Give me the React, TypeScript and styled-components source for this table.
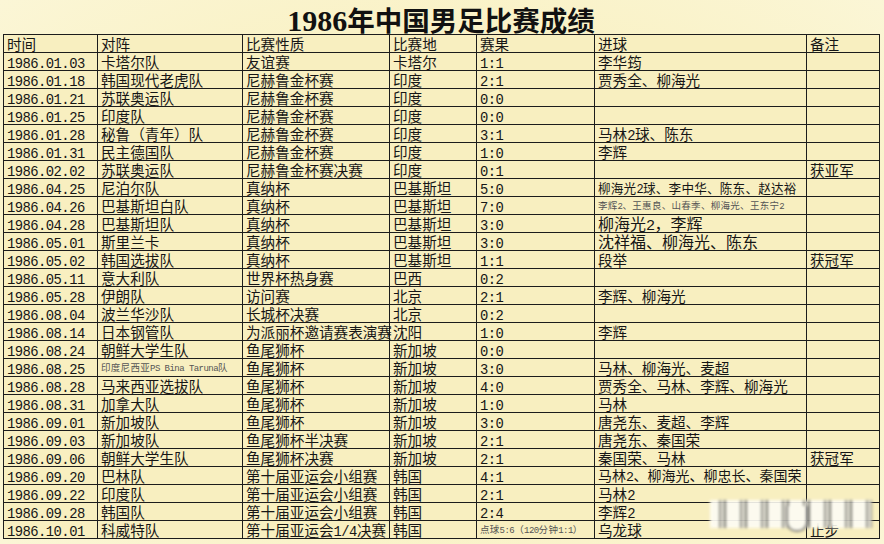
import React from 'react';
import styled, { createGlobalStyle, css } from 'styled-components';

type Size = 'lg' | 'md' | 'nm' | 'sm' | 'xs';

type Row = {
    date: string;
    team: string;
    teamSize?: Size;
    kind: string;
    place: string;
    score: string;
    scoreSize?: Size;
    goals?: string;
    goalsSize?: Size;
    note?: string;
};

const rows: Row[] = [
    { date: '1986.01.03', team: '卡塔尔队', kind: '友谊赛', place: '卡塔尔', score: '1:1', goals: '李华筠' },
    { date: '1986.01.18', team: '韩国现代老虎队', kind: '尼赫鲁金杯赛', place: '印度', score: '2:1', goals: '贾秀全、柳海光' },
    { date: '1986.01.21', team: '苏联奥运队', kind: '尼赫鲁金杯赛', place: '印度', score: '0:0' },
    { date: '1986.01.25', team: '印度队', kind: '尼赫鲁金杯赛', place: '印度', score: '0:0' },
    { date: '1986.01.28', team: '秘鲁（青年）队', kind: '尼赫鲁金杯赛', place: '印度', score: '3:1', goals: '马林2球、陈东' },
    { date: '1986.01.31', team: '民主德国队', kind: '尼赫鲁金杯赛', place: '印度', score: '1:0', goals: '李辉' },
    { date: '1986.02.02', team: '苏联奥运队', kind: '尼赫鲁金杯赛决赛', place: '印度', score: '0:1', note: '获亚军' },
    { date: '1986.04.25', team: '尼泊尔队', kind: '真纳杯', place: '巴基斯坦', score: '5:0', goals: '柳海光2球、李中华、陈东、赵达裕', goalsSize: 'sm' },
    { date: '1986.04.26', team: '巴基斯坦白队', kind: '真纳杯', place: '巴基斯坦', score: '7:0', goals: '李辉2、王惠良、山春季、柳海光、王东宁2', goalsSize: 'xs' },
    { date: '1986.04.28', team: '巴基斯坦队', kind: '真纳杯', place: '巴基斯坦', score: '3:0', goals: '柳海光2，李辉', goalsSize: 'lg' },
    { date: '1986.05.01', team: '斯里兰卡', kind: '真纳杯', place: '巴基斯坦', score: '3:0', goals: '沈祥福、柳海光、陈东', goalsSize: 'lg' },
    { date: '1986.05.02', team: '韩国选拔队', kind: '真纳杯', place: '巴基斯坦', score: '1:1', goals: '段举', note: '获冠军' },
    { date: '1986.05.11', team: '意大利队', kind: '世界杯热身赛', place: '巴西', score: '0:2' },
    { date: '1986.05.28', team: '伊朗队', kind: '访问赛', place: '北京', score: '2:1', goals: '李辉、柳海光' },
    { date: '1986.08.04', team: '波兰华沙队', kind: '长城杯决赛', place: '北京', score: '0:2' },
    { date: '1986.08.14', team: '日本钢管队', kind: '为派丽杯邀请赛表演赛', place: '沈阳', score: '1:0', goals: '李辉' },
    { date: '1986.08.24', team: '朝鲜大学生队', kind: '鱼尾狮杯', place: '新加坡', score: '0:0' },
    { date: '1986.08.25', team: '印度尼西亚PS Bina Taruna队', teamSize: 'xs', kind: '鱼尾狮杯', place: '新加坡', score: '3:0', goals: '马林、柳海光、麦超' },
    { date: '1986.08.28', team: '马来西亚选拔队', kind: '鱼尾狮杯', place: '新加坡', score: '4:0', goals: '贾秀全、马林、李辉、柳海光' },
    { date: '1986.08.31', team: '加拿大队', kind: '鱼尾狮杯', place: '新加坡', score: '1:0', goals: '马林' },
    { date: '1986.09.01', team: '新加坡队', kind: '鱼尾狮杯', place: '新加坡', score: '3:0', goals: '唐尧东、麦超、李辉' },
    { date: '1986.09.03', team: '新加坡队', kind: '鱼尾狮杯半决赛', place: '新加坡', score: '2:1', goals: '唐尧东、秦国荣' },
    { date: '1986.09.06', team: '朝鲜大学生队', kind: '鱼尾狮杯决赛', place: '新加坡', score: '2:1', goals: '秦国荣、马林', note: '获冠军' },
    { date: '1986.09.20', team: '巴林队', kind: '第十届亚运会小组赛', place: '韩国', score: '4:1', goals: '马林2、柳海光、柳忠长、秦国荣', goalsSize: 'nm' },
    { date: '1986.09.22', team: '印度队', kind: '第十届亚运会小组赛', place: '韩国', score: '2:1', goals: '马林2' },
    { date: '1986.09.28', team: '韩国队', kind: '第十届亚运会小组赛', place: '韩国', score: '2:4', goals: '李辉2' },
    { date: '1986.10.01', team: '科威特队', kind: '第十届亚运会1/4决赛', place: '韩国', score: '点球5:6（120分钟1:1）', scoreSize: 'xs', goals: '乌龙球', note: '止步' },
];

const headers = ['时间', '对阵', '比赛性质', '比赛地', '赛果', '进球', '备注'];
const widths = [94, 145, 147, 87, 118, 212, 73];

// ascii runs get the narrow mono face, like the old SimSun half-width glyphs
const mix = (text: string) =>
    text.split(/([\x20-\x7e]+)/).map((part, i) =>
        /^[\x20-\x7e]+$/.test(part) ? <Latin key={i}>{part}</Latin> : part
    );

const Cell = ({ size, children }: { size?: Size, children?: React.ReactNode }) => (
    <StyledCell>
        <CellText size={size}>{children}</CellText>
    </StyledCell>
);

const App = () => {
    return (
        <>
            <GlobalStyle />
            <StyledPage>
                <StyledTitle>
                    <TitleNum>1986</TitleNum>年中国男足比赛成绩
                </StyledTitle>
                <StyledSheet>
                    <StyledTable>
                        <colgroup>
                            {widths.map((w, i) => <col key={i} style={{ width: w }} />)}
                        </colgroup>
                        <tbody>
                            <tr>
                                {headers.map(h => <Cell key={h}>{h}</Cell>)}
                            </tr>
                            {rows.map(r => (
                                <tr key={r.date}>
                                    <Cell>{mix(r.date)}</Cell>
                                    <Cell size={r.teamSize}>{mix(r.team)}</Cell>
                                    <Cell>{mix(r.kind)}</Cell>
                                    <Cell>{r.place}</Cell>
                                    <Cell size={r.scoreSize}>{mix(r.score)}</Cell>
                                    <Cell size={r.goalsSize}>{r.goals ? mix(r.goals) : ''}</Cell>
                                    <Cell>{r.note || ''}</Cell>
                                </tr>
                            ))}
                        </tbody>
                    </StyledTable>
                    <Watermark>
                        <WatermarkRing />
                    </Watermark>
                </StyledSheet>
            </StyledPage>
        </>
    );
};

const GlobalStyle = createGlobalStyle`
body {
    margin: 0;
    background: #fbf6d3;
    font-family: "Noto Sans CJK SC", "Noto Sans", sans-serif;
    color: #161616;
}
`;

const StyledPage = styled('div')`
width: 884px;
height: 544px;
padding: 0 5px 0 3px;
box-sizing: border-box;
overflow: hidden;
background: radial-gradient(ellipse at center, #f9f1c3 55%, #fbf6d6 100%);
`;

const StyledTitle = styled('div')`
height: 30px;
padding-top: 4px;
line-height: 30px;
text-align: center;
font-size: 27.5px;
font-weight: 700;
color: #111;
`;

const TitleNum = styled('span')`
font-family: "Liberation Serif", serif;
font-size: 30px;
font-weight: 700;
`;

const StyledSheet = styled('div')`
position: relative;
`;

const StyledTable = styled('table')`
border-collapse: collapse;
table-layout: fixed;
width: 876px;
background: #f8efc0;
`;

const sizes = {
    lg: css`font-size: 16px;`,
    md: css`font-size: 14.6px;`,
    nm: css`font-size: 14px;`,
    sm: css`font-size: 12.6px; letter-spacing: 0.2px;`,
    xs: css`font-size: 9.5px; color: #555; letter-spacing: 0.3px;`,
};

const StyledCell = styled('td')`
border: 1px solid #1c1c1c;
padding: 0;
height: 17px;
`;

const CellText = styled('div')<{ size?: Size }>`
height: 17px;
line-height: 17px;
padding-left: 3px;
white-space: nowrap;
font-weight: 400;
${(props) => sizes[props.size || 'md']}
`;

const Latin = styled('span')`
font-family: "Liberation Mono", "DejaVu Sans Mono", monospace;
font-size: 0.95em;
letter-spacing: -0.55px;
`;

const Watermark = styled('div')`
position: absolute;
left: 707px;
top: 466px;
width: 162px;
height: 28px;
background:
    repeating-linear-gradient(90deg, #fdfcf4 0 9px, #8a8a86 9px 11px, #e6e4da 11px 14px, #6f6f6b 14px 16px, #fdfcf4 16px 21px),
    #fdfcf4;
filter: blur(1.6px);
opacity: 0.92;
`;

const WatermarkRing = styled('div')`
position: absolute;
left: 76px;
top: 6px;
width: 18px;
height: 24px;
border-radius: 0 0 10px 10px;
border: 2px solid #777;
border-top: none;
background: #fdfcf4;
`;

export default App;
